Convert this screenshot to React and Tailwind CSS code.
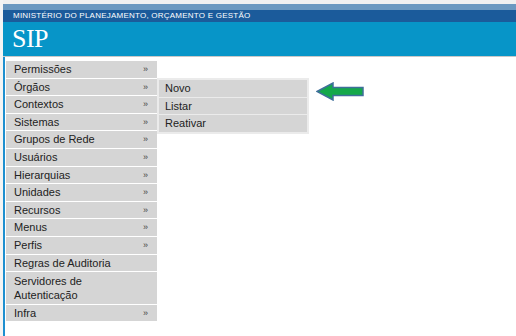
import React from "react";

const items = [
  { t: "Permissões", a: true },
  { t: "Órgãos", a: true },
  { t: "Contextos", a: true },
  { t: "Sistemas", a: true },
  { t: "Grupos de Rede", a: true },
  { t: "Usuários", a: true },
  { t: "Hierarquias", a: true },
  { t: "Unidades", a: true },
  { t: "Recursos", a: true },
  { t: "Menus", a: true },
  { t: "Perfis", a: true },
  { t: "Regras de Auditoria", a: false },
  { t: "Servidores de Autenticação", a: false, dbl: true },
  { t: "Infra", a: true },
];

export default function App() {
  return (
    <div
      className="w-[516px] h-[336px] bg-white overflow-hidden flex"
      style={{ fontFamily: '"Liberation Sans", Arial, sans-serif' }}
    >
      <div className="w-[3px] bg-[#f4f4f4]" />
      <div className="w-[2px] bg-[#1e8fd0] mt-[4px]" />
      <div className="flex-1 flex flex-col">
        <div className="h-[4px] bg-[#f0f0f0] -ml-[2px]" />
        <div className="-ml-[2px] flex flex-col">
          <div className="h-[6px] bg-[#6b98c0]" />
          <div className="h-[12px] bg-[#1b5b9b] pl-[10px] flex items-center">
            <span className="text-white text-[8px] tracking-[0.23px] leading-none">
              MINISTÉRIO DO PLANEJAMENTO, ORÇAMENTO E GESTÃO
            </span>
          </div>
          <div className="h-[34px] bg-[#0795c8] pl-[9px] flex items-center">
            <span
              className="text-white text-[26px] leading-none tracking-[-0.5px]"
              style={{ fontFamily: '"Liberation Serif", "Times New Roman", serif' }}
            >
              SIP
            </span>
          </div>
          <div className="h-[1px] bg-[#c8c8c8]" />
        </div>
        <div className="flex pl-[1px] pt-[4px]">
          <div className="flex flex-col w-[151px] gap-[1px]">
            {items.map((it) => (
              <div
                key={it.t}
                className={`bg-[#d5d5d5] flex items-start justify-between pl-[8px] pr-[9px] text-[11px] text-[#222] ${
                  it.dbl ? "h-[31.6px] leading-[14px] pt-[1.5px]" : "h-[16.6px] leading-[16.6px]"
                }`}
              >
                <span className={it.dbl ? "w-[90px]" : ""}>{it.t}</span>
                {it.a && <span className="text-[9px] text-[#444] leading-[16.6px]">»</span>}
              </div>
            ))}
          </div>
          <div className="mt-[17px] border border-[#ebebeb] bg-[#ebebeb] p-[1px] flex flex-col gap-[1px] w-[152px] self-start">
            {["Novo", "Listar", "Reativar"].map((s) => (
              <div key={s} className="bg-[#d5d5d5] h-[16.6px] leading-[16.6px] pl-[6px] text-[11px] text-[#222]">
                {s}
              </div>
            ))}
          </div>
          <div className="ml-[7px] mt-[21px]">
            <svg width="49" height="19" viewBox="0 0 49 19">
              <polygon
                points="1,9.5 17,1 17,5.5 47,5.5 47,13.5 17,13.5 17,18"
                fill="#14a84a"
                stroke="#3f6f9a"
                strokeWidth="1.5"
                strokeLinejoin="miter"
              />
            </svg>
          </div>
        </div>
      </div>
    </div>
  );
}
